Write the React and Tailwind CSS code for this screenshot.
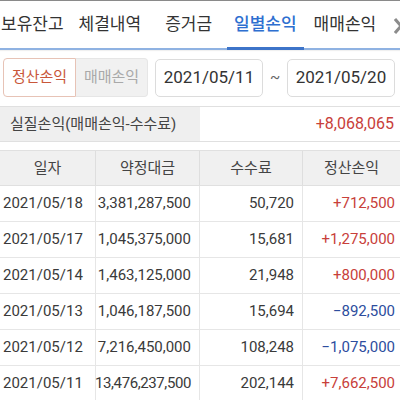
const rows = [
  { date: '2021/05/18', amount: '3,381,287,500', fee: '50,720', pnl: '+712,500' },
  { date: '2021/05/17', amount: '1,045,375,000', fee: '15,681', pnl: '+1,275,000' },
  { date: '2021/05/14', amount: '1,463,125,000', fee: '21,948', pnl: '+800,000' },
  { date: '2021/05/13', amount: '1,046,187,500', fee: '15,694', pnl: '−892,500' },
  { date: '2021/05/12', amount: '7,216,450,000', fee: '108,248', pnl: '−1,075,000' },
  { date: '2021/05/11', amount: '13,476,237,500', fee: '202,144', pnl: '+7,662,500', tight: true },
];

export default function App() {
  return (
    <div
      className="w-[400px] h-[400px] overflow-hidden bg-white text-[#3a3a3a]"
      style={{ fontFamily: 'Roboto, "Noto Sans CJK KR", sans-serif' }}
    >
      {/* tabs */}
      <div className="border-t border-[#8a8a8a]">
        <div className="relative flex h-[49px] items-center border-b-2 border-[#8fb2e2] text-[17px] text-[#333] shadow-[0_1px_1px_rgba(0,0,0,0.06)]">
          <span className="ml-[1px]">보유잔고</span>
          <span className="ml-[15px]">체결내역</span>
          <span className="ml-[24px]">증거금</span>
          <span className="relative ml-[15px] flex h-full items-center px-[7px] font-medium text-[#2e6fd0]">
            일별손익
            <span className="absolute bottom-[-2px] left-0 right-0 h-[3px] bg-[#3d74c9]" />
          </span>
          <span className="ml-[10px]">매매손익</span>
          <svg className="absolute right-[-3px] top-[17px]" width="9" height="16" viewBox="0 0 9 16">
            <path d="M1 1 L7 8 L1 15" fill="none" stroke="#8c8c8c" strokeWidth="3" />
          </svg>
        </div>
      </div>

      {/* filter row */}
      <div className="flex items-center pt-[8px]">
        <div className="ml-[3px] flex h-[39px] w-[145px] text-[15px]">
          <div className="flex w-[73px] items-center justify-center rounded-l-[4px] border border-[#e7c3b6] bg-white text-[#c9573a]">
            정산손익
          </div>
          <div className="flex w-[72px] items-center justify-center rounded-r-[4px] border border-l-0 border-[#e6e6e6] bg-[#f1f1f1] text-[#a9a9a9]">
            매매손익
          </div>
        </div>
        <div className="ml-[7px] flex h-[38px] w-[108px] items-center justify-center rounded-[5px] border border-[#dcdcdc] text-[17px] text-[#333]">
          2021/05/11
        </div>
        <div className="w-[24px] text-center text-[15px] text-[#666]">~</div>
        <div className="flex h-[38px] w-[108px] items-center justify-center rounded-[5px] border border-[#dcdcdc] text-[17px] text-[#333]">
          2021/05/20
        </div>
      </div>

      {/* realized pnl */}
      <div className="mt-[9px] flex h-[36px] border-y border-[#e0e0e0]">
        <div className="flex w-[200px] items-center bg-[#efefef] pl-[10px] text-[15px] text-[#444]">
          실질손익(매매손익-수수료)
        </div>
        <div className="flex flex-1 items-center justify-end pr-[6px] text-[16px] text-[#c8403a]">
          +8,068,065
        </div>
      </div>

      {/* table */}
      <div className="mt-[8px] border-t border-[#e0e0e0] text-[15px]">
        <div className="grid h-[35px] grid-cols-[96px_104px_103px_97px] border-b border-[#e0e0e0] bg-[#f0f0f0] text-[15px] text-[#444]">
          <div className="flex items-center justify-center border-r border-[#dedede]">일자</div>
          <div className="flex items-center justify-center border-r border-[#dedede]">약정대금</div>
          <div className="flex items-center justify-center border-r border-[#dedede]">수수료</div>
          <div className="flex items-center justify-center">정산손익</div>
        </div>
        {rows.map((r) => (
          <div
            key={r.date}
            className="grid h-[36px] grid-cols-[96px_104px_103px_97px] border-b border-[#e6e6e6]"
          >
            <div className="flex items-center border-r border-[#e6e6e6] pl-[3px]">{r.date}</div>
            <div
              className={
                r.tight
                  ? 'flex items-center justify-end border-r border-[#e6e6e6] pr-[8px] tracking-[-0.4px]'
                  : 'flex items-center justify-end border-r border-[#e6e6e6] pr-[8px]'
              }
            >
              {r.amount}
            </div>
            <div className="flex items-center justify-end border-r border-[#e6e6e6] pr-[8px]">{r.fee}</div>
            <div
              className={
                r.pnl.startsWith('+')
                  ? 'flex items-center justify-end pr-[5px] text-[#c8403a]'
                  : 'flex items-center justify-end pr-[5px] text-[#2d4d9e]'
              }
            >
              {r.pnl}
            </div>
          </div>
        ))}
      </div>
    </div>
  );
}
